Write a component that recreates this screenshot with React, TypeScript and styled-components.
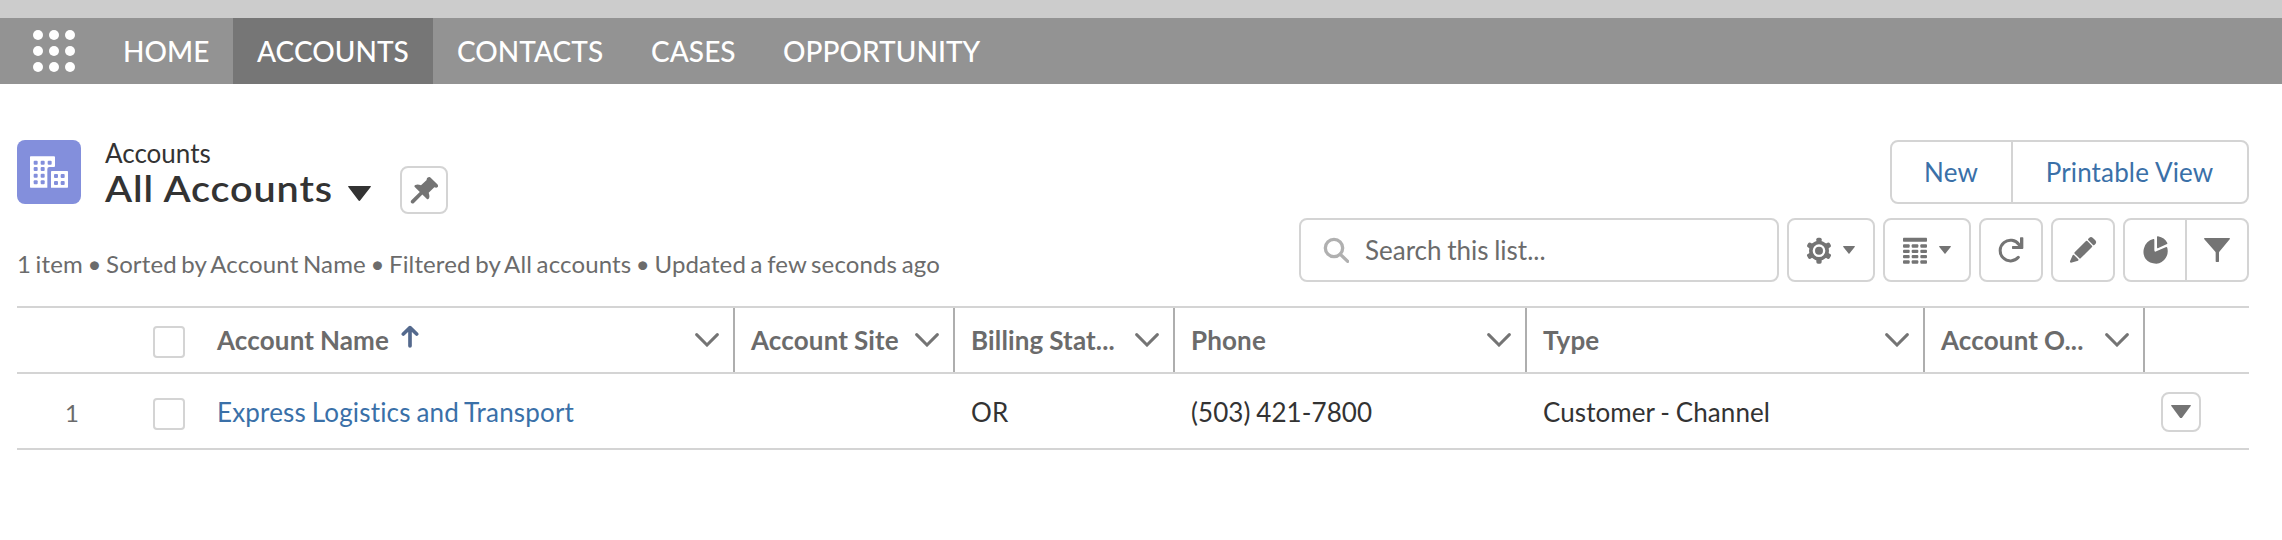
import React from 'react';
import styled, { createGlobalStyle } from 'styled-components';

const Global = createGlobalStyle`
  *, *::before, *::after { box-sizing: border-box; }
  body {
    margin: 0;
    background: #fff;
    color: #333;
    font-family: Lato, "Liberation Sans", sans-serif;
    font-size: 26px;
    font-variant-ligatures: none;
  }
  button { font: inherit; background: none; border: 0; padding: 0; margin: 0; color: inherit; }
  svg { display: block; flex: none; }
`;

const TopStrip = styled.div`
  height: 18px;
  background: #ccc;
`;

const Nav = styled.nav`
  display: flex;
  align-items: stretch;
  height: 66px;
  padding-left: 33px;
  background: #939393;
`;

const Waffle = styled.button`
  display: grid;
  grid-template-columns: repeat(3, 10px);
  grid-auto-rows: 10px;
  gap: 6px;
  align-content: start;
  width: 66px;
  padding-top: 12px;
`;

const Dot = styled.span`
  border-radius: 50%;
  background: #fff;
`;

const NavItem = styled.a<{ $width: number; $active?: boolean }>`
  display: flex;
  align-items: center;
  width: ${p => p.$width}px;
  padding: 0 0 0 24px;
  background: ${p => (p.$active ? '#767676' : 'transparent')};
  color: #fff;
  font-size: 28px;
  font-weight: 500;
  letter-spacing: 0.05px;
  white-space: nowrap;
`;

const Page = styled.main`
  padding: 56px 33px 0 17px;
`;

const HeaderRow = styled.header`
  display: flex;
  align-items: flex-start;
  justify-content: space-between;
  height: 78px;
`;

const TitleArea = styled.div`
  display: flex;
`;

const EntityIcon = styled.span`
  width: 64px;
  height: 64px;
  margin-right: 24px;
  border-radius: 8px;
  background: #838fdc;
`;

const Crumb = styled.div`
  height: 28px;
  line-height: 26px;
`;

const TitleLine = styled.h1`
  display: flex;
  align-items: center;
  height: 40px;
  margin: 0;
  font-size: 36px;
  font-weight: 600;
  line-height: 40px;
  letter-spacing: 0.8px;
  white-space: nowrap;
`;

const TitleText = styled.span`
  width: 243px;
  transform: scaleX(1.1);
  transform-origin: left;
`;

const TitleCaret = styled.span`
  padding-top: 10px;
`;

const Box = styled.button<{ $w: number; $h?: number }>`
  display: flex;
  align-items: center;
  justify-content: center;
  width: ${p => p.$w}px;
  height: ${p => p.$h ?? 64}px;
  border: 2px solid #d4d4d4;
  border-radius: 8px;
  color: #747474;
`;

const PinSlot = styled.div`
  padding: 26px 0 0 29px;
`;

const ButtonGroup = styled.div`
  display: flex;
  height: 64px;
  border: 2px solid #d4d4d4;
  border-radius: 8px;
`;

const GroupButton = styled.button<{ $w: number }>`
  display: flex;
  align-items: center;
  justify-content: center;
  width: ${p => p.$w}px;
  color: #747474;
  & + & { border-left: 2px solid #d4d4d4; }
`;

const TextButton = styled(GroupButton)`
  padding-right: 1px;
  color: #3a70a8;
  letter-spacing: 0.15px;
`;

const ToolRow = styled.div`
  display: flex;
  align-items: flex-start;
  justify-content: space-between;
  height: 88px;
`;

const Meta = styled.p`
  margin: 31px 0 0;
  color: #6b6b6b;
  font-size: 24px;
  line-height: 30px;
  letter-spacing: 0.13px;
  word-spacing: -1.7px;
  white-space: nowrap;
`;

const Tools = styled.div`
  display: flex;
  gap: 8px;
`;

const Search = styled.label`
  display: flex;
  align-items: center;
  width: 480px;
  height: 64px;
  padding-left: 22px;
  border: 2px solid #d4d4d4;
  border-radius: 8px;
  color: #6b6b6b;
`;

const SearchText = styled.span`
  margin-left: 16px;
  word-spacing: -1px;
`;

const GearGroup = styled.span`
  display: flex;
  align-items: center;
  gap: 11px;
  padding-right: 1px;
`;

const Table = styled.div`
  border-top: 2px solid #d4d4d4;
`;

const Row = styled.div<{ $h: number }>`
  display: grid;
  grid-template-columns: 114px 86px 518px 220px 220px 352px 398px 220px 1fr;
  height: ${p => p.$h}px;
  border-bottom: 2px solid #d4d4d4;
`;

const HeadCell = styled.div<{ $first?: boolean; $plain?: boolean }>`
  display: flex;
  align-items: center;
  justify-content: space-between;
  padding: 0 14px 0 ${p => (p.$first ? 0 : 16)}px;
  border-right: ${p => (p.$plain ? '0' : '2px solid #aeaeae')};
  color: #6b6b6b;
  font-weight: 700;
  letter-spacing: 0.15px;
  word-spacing: -0.7px;
  white-space: nowrap;
`;

const HeadLabel = styled.span`
  display: flex;
  align-items: center;
  gap: 12px;
`;

const Cell = styled.div<{ $first?: boolean }>`
  display: flex;
  align-items: center;
  padding: 1px 0 0 ${p => (p.$first ? 0 : 16)}px;
  word-spacing: -1px;
  letter-spacing: 0.08px;
  white-space: nowrap;
`;

const NumberCell = styled(Cell)`
  padding: 2px 0 0 48px;
  color: #6b6b6b;
  font-size: 24px;
`;

const CheckCell = styled.div<{ $top: number }>`
  padding: ${p => p.$top}px 0 0 22px;
`;

const Check = styled.span`
  display: block;
  width: 32px;
  height: 32px;
  border: 2px solid #d4d4d4;
  border-radius: 4px;
`;

const RecordLink = styled.a`
  color: #3a70a8;
  letter-spacing: 0.17px;
`;

/* Icon artwork is drawn on a grid of three units per pixel. */
const Icon = ({ w, h, children }: { w: number; h: number; children: React.ReactNode }) => (
  <svg width={w} height={h} viewBox={`0 0 ${w * 3} ${h * 3}`} fill="currentColor">{children}</svg>
);

const SmallCaret = () => <Icon w={12} h={8}><path d="M2 0h32q3 0 1 3L20 22q-2 3-4 0L1 3Q-1 0 2 0z" /></Icon>;

const Chevron = () => (
  <Icon w={24} h={14}>
    <path d="M5 5L36 36 67 5" fill="none" stroke="#747474" strokeWidth="9" strokeLinecap="round" />
  </Icon>
);

const Buildings = () => (
  <svg width="64" height="64" viewBox="0 0 192 192">
    <path d="M41 49h70q3 0 3 3v26q0 3-3 3H97q-6 0-6 6v56H41q-2 0-2-2V51q0-2 2-2z" fill="#fff" />
    <path d="M104 93h47q2 0 2 2v46q0 2-2 2h-49V95q0-2 2-2z" fill="#fff" />
    <g fill="#838fdc">
      {[[50, 62], [71, 62], [92, 62], [50, 81], [71, 81], [50, 101], [71, 101], [50, 121], [71, 121], [111, 102], [131, 102], [111, 123], [131, 123]].map(([x, y]) => (
        <rect key={`${x}-${y}`} x={x} y={y} width="12" height="12" rx="3" />
      ))}
    </g>
  </svg>
);

const columns: [string, boolean?][] = [
  ['Account Name', true], ['Account Site'], ['Billing Stat...'], ['Phone'], ['Type'], ['Account O...'],
];

export default function App() {
  return (
    <>
      <Global />
      <TopStrip />
      <Nav>
        <Waffle aria-label="App launcher">{Array.from({ length: 9 }, (_, i) => <Dot key={i} />)}</Waffle>
        <NavItem $width={134}>HOME</NavItem>
        <NavItem $width={200} $active>ACCOUNTS</NavItem>
        <NavItem $width={194}>CONTACTS</NavItem>
        <NavItem $width={132}>CASES</NavItem>
        <NavItem $width={244}>OPPORTUNITY</NavItem>
      </Nav>
      <Page>
        <HeaderRow>
          <TitleArea>
            <EntityIcon><Buildings /></EntityIcon>
            <div>
              <Crumb>Accounts</Crumb>
              <TitleLine>
                <TitleText>All Accounts</TitleText>
                <TitleCaret>
                  <Icon w={23} h={15}><path d="M2 0h65q3 0 1 3L37 43q-3 4-6 0L1 3Q-1 0 2 0z" /></Icon>
                </TitleCaret>
              </TitleLine>
            </div>
            <PinSlot>
              <Box $w={48} $h={48} aria-label="Pin">
                <Icon w={28} h={28}>
                  <path d="M55 4q4-3 7 1l20 20q4 5 1 8-3 4-10 1L56 50q4 11 1 17-3 5-7 1L15 34q-4-4 1-7 7-3 17 1l17-16q-1-6 5-8z" />
                  <path d="M34 51L8 77" stroke="currentColor" strokeWidth="11" strokeLinecap="round" />
                </Icon>
              </Box>
            </PinSlot>
          </TitleArea>
          <ButtonGroup>
            <TextButton $w={119}>New</TextButton>
            <TextButton $w={236}>Printable View</TextButton>
          </ButtonGroup>
        </HeaderRow>
        <ToolRow>
          <Meta>1 item • Sorted by Account Name • Filtered by All accounts • Updated a few seconds ago</Meta>
          <Tools>
            <Search>
              <Icon w={26} h={26}>
                <g fill="none" stroke="#b0b0b0">
                  <circle cx="33" cy="33" r="26" strokeWidth="10" />
                  <path d="M52 52L74 73" strokeWidth="10" strokeLinecap="round" />
                </g>
              </Icon>
              <SearchText>Search this list...</SearchText>
            </Search>
            <Box $w={88} aria-label="List settings">
              <GearGroup>
                <Icon w={26} h={28}>
                  <g transform="translate(39 44)">
                    {[0, 60, 120, 180, 240, 300].map(a => (
                      <rect key={a} x="-8" y="-39" width="16" height="18" rx="5" transform={`rotate(${a})`} />
                    ))}
                    <circle r="24.5" fill="none" stroke="currentColor" strokeWidth="11" />
                    <circle r="12" />
                  </g>
                </Icon>
                <SmallCaret />
              </GearGroup>
            </Box>
            <Box $w={88} aria-label="Display as">
              <GearGroup>
                <Icon w={26} h={28}>
                  <rect x="3" y="5" width="72" height="12" rx="2" />
                  {[25, 41, 57, 73].map(y => [3, 29, 55].map(x => (
                    <rect key={`${x}-${y}`} x={x} y={y} width="20" height="10" rx="3" />
                  )))}
                </Icon>
                <SmallCaret />
              </GearGroup>
            </Box>
            <Box $w={64} aria-label="Refresh">
              <Icon w={26} h={26}>
                <path d="M63 23A31 31 0 1 0 61 61" fill="none" stroke="currentColor" strokeWidth="9" strokeLinecap="round" />
                <path d="M66 3q0-2 2-2h6q2 0 2 2v30q0 3-3 3H44q-2 0-2-2v-5q0-2 2-2h22z" />
              </Icon>
            </Box>
            <Box $w={64} aria-label="Edit">
              <Icon w={28} h={28}>
                <path d="M51 15q2-2 4 0l14 14q2 2 0 4L35 67q-2 2-4 0L17 53q-2-2 0-4z" />
                <path d="M58 8l3-3q5-4 10 0l8 8q5 5 1 10l-4 4q-2 2-4 0L58 13q-2-3 0-5z" />
                <path d="M11 58q1-3 4-1l13 13q2 2-1 4L6 80q-4 0-3-4z" />
              </Icon>
            </Box>
            <ButtonGroup>
              <GroupButton $w={60} aria-label="Charts">
                <Icon w={26} h={28}>
                  <g transform="translate(2 0)">
                    <path d="M32 9q3-1 3 3v30q0 7 6 4l28-12q4-2 5 2 4 16-5 30-10 16-28 17Q20 83 9 69-1 54 4 37 10 14 32 9z" />
                    <path d="M43 3q0-3 3-2 20 4 28 20 1 2-1 3L47 36q-4 2-4-2z" />
                  </g>
                </Icon>
              </GroupButton>
              <GroupButton $w={62} aria-label="Filters">
                <Icon w={26} h={26}>
                  <path d="M2 3h74q3 1 1 4L46 44q-1 1-1 3v26q0 2-2 2h-6q-2 0-2-2V47q0-2-1-3L1 7Q-1 4 2 3z" />
                </Icon>
              </GroupButton>
            </ButtonGroup>
          </Tools>
        </ToolRow>
        <Table>
          <Row $h={66}>
            <div />
            <CheckCell $top={18}><Check /></CheckCell>
            {columns.map(([label, sorted]) => (
              <HeadCell key={label} $first={sorted}>
                <HeadLabel>
                  {label}
                  {sorted && (
                    <Icon w={18} h={32}>
                      <path d="M27 11v55M7 30L27 11 47 30" fill="none" stroke="#54698d" strokeWidth="11" strokeLinecap="round" strokeLinejoin="round" />
                    </Icon>
                  )}
                </HeadLabel>
                <Chevron />
              </HeadCell>
            ))}
            <HeadCell $plain />
          </Row>
          <Row $h={76}>
            <NumberCell>1</NumberCell>
            <CheckCell $top={24}><Check /></CheckCell>
            <Cell $first><RecordLink>Express Logistics and Transport</RecordLink></Cell>
            <Cell />
            <Cell>OR</Cell>
            <Cell>(503) 421-7800</Cell>
            <Cell>Customer - Channel</Cell>
            <Cell />
            <Cell>
              <Box $w={40} $h={40} aria-label="Row actions">
                <Icon w={20} h={13}><path d="M2 0h56q3 0 1 3L33 38q-3 3-6 0L1 3Q-1 0 2 0z" /></Icon>
              </Box>
            </Cell>
          </Row>
        </Table>
      </Page>
    </>
  );
}
